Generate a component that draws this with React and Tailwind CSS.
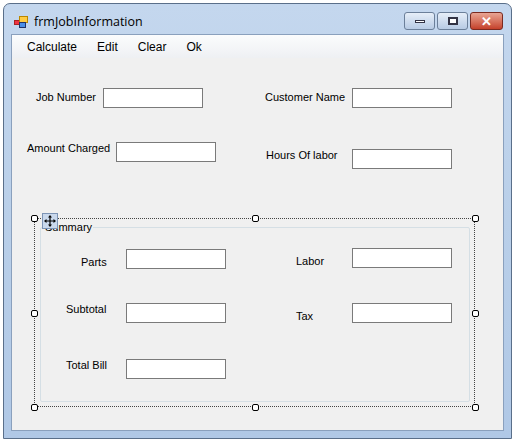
export default function App() {
  const font = { fontFamily: '"Liberation Sans", Arial, sans-serif' };
  const Label = ({ x, y, children }) => (
    <span className="absolute text-[11px] leading-none text-black" style={{ left: x, top: y - 6 }}>{children}</span>
  );
  const Box = ({ x, y }) => (
    <div className="absolute w-[100px] h-[20px] bg-white border border-[#7a7a7a]" style={{ left: x, top: y }} />
  );
  const Handle = ({ x, y }) => (
    <div className="absolute w-[7px] h-[7px] bg-white border border-black rounded-[2px]" style={{ left: x - 3, top: y - 3 }} />
  );
  return (
    <div className="relative w-[519px] h-[445px] bg-white overflow-hidden" style={font}>
      {/* window frame */}
      <div className="absolute left-[3px] top-[3px] w-[509px] h-[436px] rounded-t-[7px] border border-[#5a6f8a] bg-gradient-to-b from-[#c4d7ee] via-[#b9cfe9] to-[#b0c8e6]">
        <div className="flex items-center h-[36px] pl-[10px] text-[12.5px] text-black gap-[6px]" style={{ fontFamily: '"Open Sans", "Liberation Sans", sans-serif' }}>
          <svg width="14" height="12" viewBox="0 0 14 12">
            <rect x="0.5" y="4.5" width="5" height="4" fill="#e34" stroke="#a22" />
            <rect x="5.5" y="0.5" width="8" height="6" fill="#fc4" stroke="#b80" />
            <rect x="5.5" y="6.5" width="6" height="5" fill="#4a8ee8" stroke="#236" />
          </svg>
          <span>frmJobInformation</span>
        </div>
        <div className="absolute right-[8px] top-[8px] flex gap-[2px]">
          <div className="w-[31px] h-[18px] rounded-[3px] border border-[#6b7f99] bg-gradient-to-b from-[#e6eef8] to-[#b8cbe4] flex items-center justify-center">
            <div className="w-[10px] h-[3px] bg-white border border-[#334]" />
          </div>
          <div className="w-[31px] h-[18px] rounded-[3px] border border-[#6b7f99] bg-gradient-to-b from-[#e6eef8] to-[#b8cbe4] flex items-center justify-center">
            <div className="w-[10px] h-[8px] border-2 border-[#334] bg-white" />
          </div>
          <div className="w-[33px] h-[18px] rounded-[3px] border border-[#7a2a20] bg-gradient-to-b from-[#e8a493] to-[#c4402a] flex items-center justify-center text-white text-[13px] font-bold leading-none">✕</div>
        </div>
        {/* client area */}
        <div className="absolute left-[7px] top-[30px] w-[493px] h-[397px] bg-[#f0f0f0] border border-[#8aa0bd]">
          <div className="h-[23px] flex items-center gap-[20px] pl-[15px] text-[12px] bg-gradient-to-b from-[#fbfcfd] to-[#eef0f3]">
            <span>Calculate</span><span>Edit</span><span>Clear</span><span>Ok</span>
          </div>
        </div>
      </div>

      <Label x={36} y={98}>Job Number</Label>
      <Box x={103} y={88} />
      <Label x={265} y={98}>Customer Name</Label>
      <Box x={352} y={88} />
      <Label x={27} y={149}>Amount Charged</Label>
      <Box x={116} y={142} />
      <Label x={266} y={156}>Hours Of labor</Label>
      <Box x={352} y={149} />

      {/* group box */}
      <div className="absolute left-[40px] top-[227px] w-[430px] h-[175px] border border-[#d5dfe5] rounded-[2px]" />
      <span className="absolute left-[44px] top-[222px] px-[1px] bg-[#f0f0f0] text-[11px] leading-none">Summary</span>
      <div className="absolute left-[34px] top-[218px] w-[441px] h-[189px] border border-dotted border-[#444]" />
      {[[34,218],[255,218],[475,218],[34,313],[475,313],[34,407],[255,407],[475,407]].map(([x,y],i)=>(<Handle key={i} x={x} y={y} />))}
      <div className="absolute left-[42px] top-[213px] w-[16px] h-[16px] bg-[#c9d8ec] border border-[#7d94b5] flex items-center justify-center">
        <svg width="12" height="12" viewBox="0 0 12 12" fill="#000"><path d="M6 0l2 2.5H6.6v2.9h2.9V4L12 6 9.5 8V6.6H6.6v2.9H8L6 12 4 9.5h1.4V6.6H2.5V8L0 6l2.5-2v1.4h2.9V2.5H4z"/></svg>
      </div>

      <Label x={81} y={263}>Parts</Label>
      <Box x={126} y={249} />
      <Label x={296} y={262}>Labor</Label>
      <Box x={352} y={248} />
      <Label x={66} y={310}>Subtotal</Label>
      <Box x={126} y={303} />
      <Label x={296} y={317}>Tax</Label>
      <Box x={352} y={303} />
      <Label x={66} y={366}>Total Bill</Label>
      <Box x={126} y={359} />
    </div>
  );
}
